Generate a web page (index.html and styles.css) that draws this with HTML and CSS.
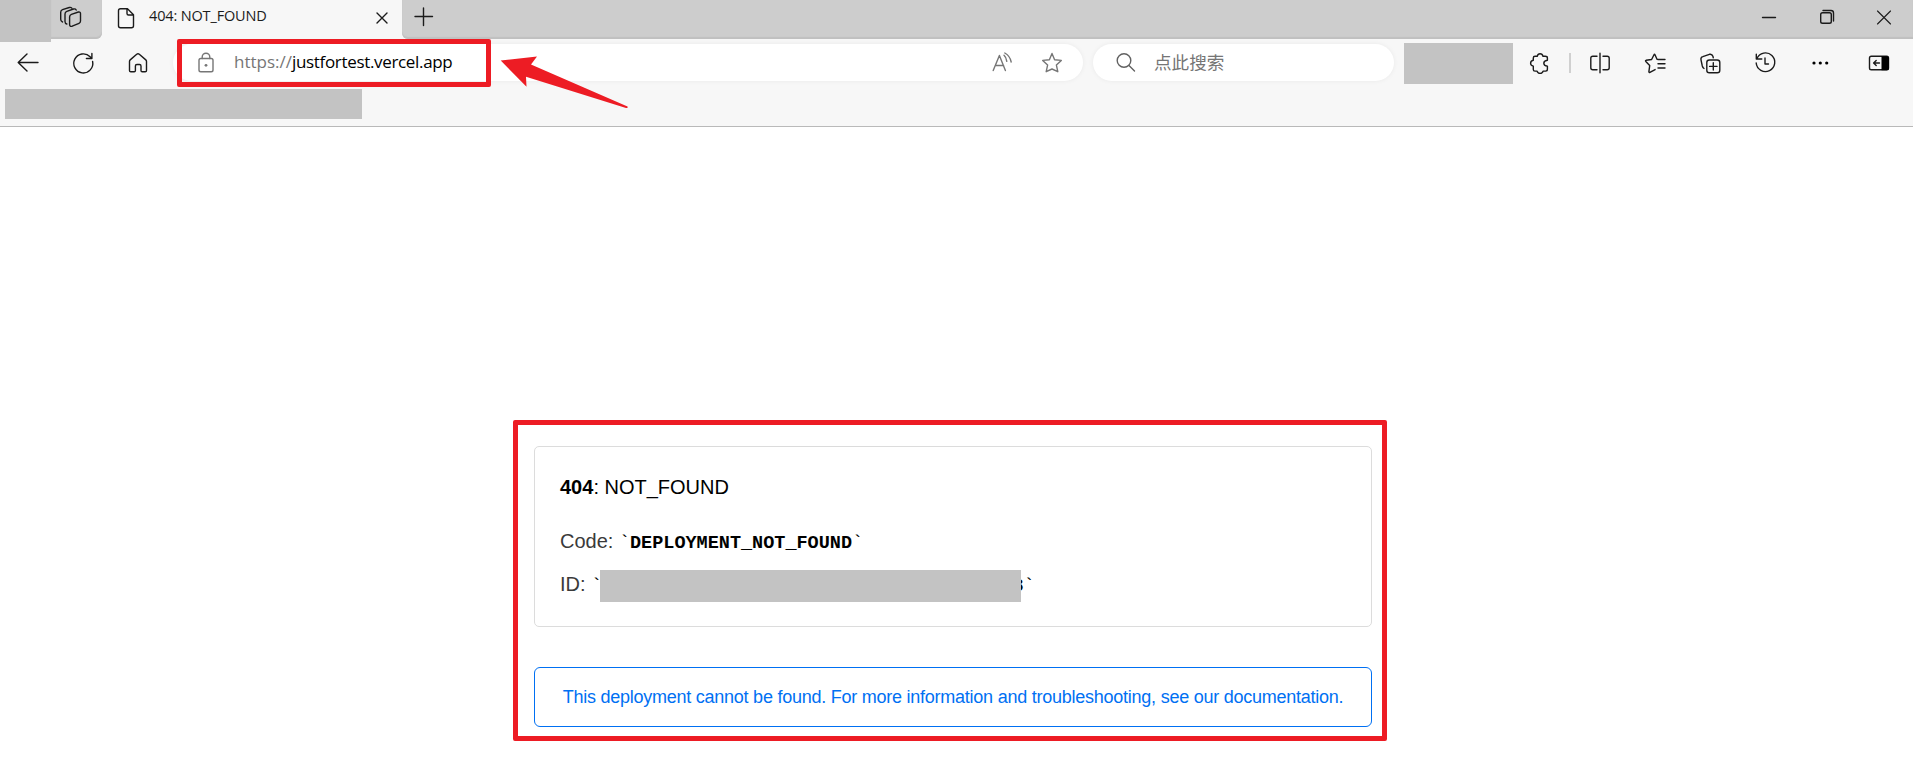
FILE: index.html
```html
<!DOCTYPE html>
<html lang="zh-CN">
<head>
<meta charset="utf-8">
<title>404: NOT_FOUND</title>
<link rel="stylesheet" href="styles.css">
</head>
<body>
<div class="tabstrip">
  <div class="mask mask-profile"></div>
  <div class="workspaces">
    <svg class="icon" viewBox="0 0 24 24"><path d="M12.400 9.300L19.400 7Q21.500 6.600 21.500 8.600V16Q21.500 17.700 20 18.300L13.200 21.200Q10.600 21.800 10.600 19.500V12Q10.600 10 12.400 9.300zM7.800 19Q6 18.500 6 16.500V9Q6 7 7.800 6.300L14.500 4Q16.500 3.600 17.200 5M3.500 17Q1.700 16.300 1.700 14.300V7.300Q1.700 5.300 3.500 4.700L10.300 2.500Q12 2.100 12.800 3.200"/></svg>
  </div>
  <div class="tab">
    <svg class="icon" viewBox="0 0 24 24"><path d="M6.500 2.700h7l6 6v11a2 2 0 0 1-2 2h-11a2 2 0 0 1-2-2v-15a2 2 0 0 1 2-2zM13 2.700v4.800a1.500 1.500 0 0 0 1.500 1.500h5"/></svg>
    <span class="tab-title">404: NOT_FOUND</span>
    <svg class="icon tab-close" viewBox="0 0 24 24"><path d="M7 7l10 10M17 7L7 17"/></svg>
  </div>
  <div class="strip-rest">
    <svg class="icon" viewBox="0 0 24 24"><path d="M3 11.500h17.500M11.500 3v17.500"/></svg>
    <div class="window-buttons">
      <svg class="icon" viewBox="0 0 24 24"><path d="M5.500 12.500h13"/></svg>
      <svg class="icon" viewBox="0 0 24 24"><rect x="5.700" y="7.700" width="10.600" height="10.600" rx="1.800"/><path d="M8 5.500h8a2.500 2.500 0 0 1 2.500 2.500v8"/></svg>
      <svg class="icon thin" viewBox="0 0 24 24"><path d="M5.500 6l13 13M18.500 6l-13 13"/></svg>
    </div>
  </div>
</div>

<div class="toolbar">
  <div class="cell"><svg class="icon" viewBox="0 0 24 24"><path d="M22 11.500H2.500M11 3L2.200 11.500l8.800 8.500"/></svg></div>
  <div class="cell"><svg class="icon" viewBox="0 0 24 24"><path d="M21.600 10.500a9.500 9.500 0 1 1-2.500-4.700l1.600 1.600M20.900 2.500v5h-5.500"/></svg></div>
  <div class="cell"><svg class="icon" viewBox="0 0 24 24"><path d="M3.500 10.500q0-1 .7-1.600l6.500-5.700q1.300-1 2.600 0l6.500 5.700q.7.600.7 1.600v9q0 1.300-1.300 1.300h-3q-1.200 0-1.200-1.300v-4.500q0-1.500-1.500-1.500h-2.600q-1.500 0-1.500 1.500v4.500q0 1.300-1.200 1.300H4.800q-1.300 0-1.300-1.300z"/></svg></div>
  <div class="address">
    <svg class="icon grey lock" viewBox="0 0 24 24"><rect x="5" y="7.500" width="14" height="13.200" rx="1.800"/><path d="M8.200 7.500V6a3.800 3.800 0 0 1 7.600 0v1.500"/><circle class="dot" cx="12" cy="14.300" r="1.400"/></svg>
    <span class="url"><span class="scheme">https://</span>justfortest.vercel.app</span>
    <svg class="icon grey aloud" viewBox="0 0 24 24"><path d="M3.200 19.500L9.400 4.500l6 15M5.400 14.500h8.200M14 4.300q2.300 2 2.800 6M14.800 2q5.300 3 6.400 9"/></svg>
    <svg class="icon grey" viewBox="0 0 24 24"><path d="M12 2.500l2.600 6.200 6.700.7-4.900 4.700 1.400 6.600L12 18l-5.800 2.700 1.400-6.600L2.700 9.400l6.700-.7z"/></svg>
  </div>
  <div class="search">
    <svg class="icon dim" viewBox="0 0 24 24"><circle cx="10" cy="9.500" r="6.800"/><path d="M15 14.500l5.500 5.500"/></svg>
    <span class="search-text">点此搜索</span>
  </div>
  <div class="mask mask-ext"></div>
  <div class="cell cell-ext"><svg class="icon" viewBox="0 0 24 24"><path d="M5.300 8V7q0-1.700 1.700-1.700h2.200q.6-2.600 2.900-2.600t2.900 2.600h2.200q2.200 0 2.200 1.700v2.300q-3.600.5-3.600 2.900t3.600 2.900v3.200q0 1.800-1.800 1.800h-2.500q-.6 2.300-3 2.300t-3-2.300H7q-1.700 0-1.700-1.700v-3.300q-2.700-.6-2.700-2.900t2.700-2.900z"/></svg></div>
  <div class="divider"></div>
  <div class="cell"><svg class="icon" viewBox="0 0 24 24"><path d="M9 5.200H4.800q-2 0-2 2v9.600q0 2 2 2H9M15 5.200h4.200q2 0 2 2v9.600q0 2-2 2H15M12 2.200v19.600"/></svg></div>
  <div class="cell"><svg class="icon" viewBox="0 0 24 24"><path d="M15.500 8.500l-1.500-.3L12 3.800q-.5-1-1 0L8.600 8.500l-5.500.8q-1 .3-.3 1.100l3.900 4.200-.8 6.100q.1 1.100 1 .6l5.200-2.700M15 8.500h7M15 12.800h7M15 17h7"/></svg></div>
  <div class="cell"><svg class="icon" viewBox="0 0 24 24"><rect x="8.800" y="9" width="13" height="12.800" rx="2.600"/><path d="M15.300 11.800v7.300M11.600 15.400h7.400M6 17.500q-1.200-.7-1.700-2.500L3 8.800q-.5-2.500 1.800-3.200l6.600-2.300q2.700-.6 3.500 2l.4 1.500"/></svg></div>
  <div class="cell"><svg class="icon" viewBox="0 0 24 24"><path d="M3.300 3.300v4.700h5.500M3.900 7.600A9.300 9.300 0 1 1 3.200 12M12 7v6h3.500"/></svg></div>
  <div class="cell"><svg class="icon" viewBox="0 0 24 24"><g class="dot"><circle cx="6" cy="12" r="1.600"/><circle cx="12.300" cy="12" r="1.600"/><circle cx="18.700" cy="12" r="1.600"/></g></svg></div>
  <div class="cell cell-side"><svg class="icon" viewBox="0 0 24 24"><rect x="2.500" y="5.300" width="19" height="13.500" rx="1.800"/><path class="solid" d="M14.500 5.300h5.500q2 0 2 1.500v10.500q0 2-2 2h-5.500z"/><path d="M12.500 12H7M9.200 9.400L6.600 12l2.600 2.600"/></svg></div>
  <div class="url-frame"></div>
  <svg class="arrow" viewBox="500 55 130 55"><path d="M500.700 60.500L537 56.500L531 64.500L627.500 106.500Q628.500 108.200 626 108L526 76.800L526.500 86.700Z"/></svg>
</div>
<div class="bookmarks"><div class="mask mask-bookmarks"></div></div>

<main class="page">
  <section class="frame">
    <div class="card">
      <h1 class="title"><strong>404</strong>: NOT_FOUND</h1>
      <p class="row">Code: <code class="code">`<b>DEPLOYMENT_NOT_FOUND</b>`</code></p>
      <p class="row">ID: <code class="code id-code">`<span class="mask mask-id"></span><b class="tail">8</b>`</code></p>
    </div>
    <a class="notice"><span>This deployment cannot be found. For more information and troubleshooting, see our documentation.</span></a>
  </section>
</main>
</body>
</html>
```
FILE: styles.css
```css
* { box-sizing: border-box; }

body {
  margin: 0;
  width: 1913px;
  height: 773px;
  overflow: hidden;
  background: #fff;
  font-family: "Liberation Sans", "Noto Sans CJK SC", sans-serif;
}

.icon {
  width: 24px;
  height: 24px;
  flex: none;
  fill: none;
  stroke: #1b1b1b;
  stroke-width: 1.4;
  stroke-linecap: round;
  stroke-linejoin: round;
}
.icon.grey { stroke: #767676; }
.icon.dim { stroke: #616161; }
.icon.thin { stroke-width: 1.1; }
.icon .dot, .icon .solid { fill: #000; stroke: none; }
.icon.grey .dot { fill: #767676; }

.mask { background: #c3c3c3; flex: none; }

/* Tab strip */
.tabstrip {
  display: flex;
  height: 39px;
  background: #f7f7f7;
}
.mask-profile { width: 51px; height: 42px; position: relative; z-index: 1; }
.workspaces, .strip-rest {
  background: #cdcdcd;
  box-shadow: inset 0 -2px 1px #c0c0c0;
  display: flex;
}
.workspaces {
  width: 51px;
  padding: 5px 0 0 8px;
  border-bottom-right-radius: 6px;
}
.tab {
  width: 300px;
  display: flex;
  padding: 6px 8px 0 12px;
}
.tab-title {
  font: 14.500px/22px "Open Sans", "Noto Sans", sans-serif;
  letter-spacing: -.15px;
  color: #1b1b1b;
  margin: -1px 0 0 11px;
  flex: 1;
  white-space: nowrap;
}
.strip-rest {
  flex: 1;
  padding: 5px 17px 0 10px;
  justify-content: space-between;
  border-bottom-left-radius: 6px;
}
.window-buttons { display: flex; gap: 33.500px; }

/* Toolbar */
.toolbar {
  display: flex;
  align-items: center;
  height: 47px;
  background: #f7f7f7;
  position: relative;
}
.cell {
  width: 55px;
  display: flex;
  justify-content: center;
  flex: none;
}
.cell-ext { width: 54px; }
.cell-side { width: 63px; }
.address, .search {
  height: 37px;
  border-radius: 19px;
  background: #fff;
  display: flex;
  align-items: center;
  box-shadow: 0 0 5px rgba(0, 0, 0, .06);
  flex: none;
}
.address {
  width: 910px;
  margin-left: 8px;
  padding: 0 19px 0 20.500px;
}
.url {
  font: 17px/24px "Open Sans", "Noto Sans", sans-serif;
  letter-spacing: -.33px;
  color: #000;
  margin: -1px 0 0 16.500px;
  flex: 1;
  white-space: nowrap;
}
.scheme { color: #767676; letter-spacing: 0; }
.aloud { margin-right: 26px; }
.search {
  width: 301px;
  margin-left: 10px;
  padding-left: 21px;
}
.search-text {
  font: 17.600px/24px "Noto Sans CJK SC", sans-serif;
  color: #757575;
  margin: -1px 0 0 16px;
}
.mask-ext { width: 109px; height: 41px; margin: 1px 0 0 10px; }
.divider { width: 2px; height: 20px; background: #d0d0d0; margin: 0 1.500px 0 2px; }
.url-frame {
  position: absolute;
  left: 177px;
  top: 0;
  width: 314px;
  height: 48px;
  border: 5px solid #ed1c24;
  border-radius: 2px;
}
.arrow {
  position: absolute;
  left: 500px;
  top: 16px;
  width: 130px;
  height: 55px;
  fill: #ed1c24;
}
.bookmarks {
  height: 41px;
  background: #f7f7f7;
  border-bottom: 1px solid #b9b9b9;
  padding: 3px 5px;
}
.mask-bookmarks { width: 357px; height: 30px; }

/* Page */
.page { padding: 293px 0 0 513px; }
.frame {
  width: 874px;
  height: 321px;
  border: 5px solid #ed1c24;
  border-radius: 2px;
  padding: 21px 10px 0 16px;
}
.card {
  height: 181px;
  border: 1px solid #dcdcdc;
  border-radius: 5px;
  padding: 24px 25px;
}
.title {
  margin: 0 0 22px;
  font-size: 20px;
  line-height: 32px;
  font-weight: 400;
  color: #000;
}
.row {
  display: flex;
  align-items: baseline;
  gap: 5.500px;
  margin: 0 0 11px;
  font-size: 20px;
  line-height: 32px;
  height: 32px;
  color: #3a3a3a;
}
.code {
  font: 18.500px/32px "Liberation Mono", monospace;
  color: #000;
}
.id-code { display: flex; align-items: flex-start; }
.mask-id { width: 421px; height: 32px; margin: -1px 0 0 -2.500px; z-index: 1; }
.tail { margin-left: -8.200px; }
.notice {
  display: flex;
  align-items: center;
  justify-content: center;
  margin-top: 40px;
  height: 60px;
  border: 1px solid #0070f3;
  border-radius: 6px;
  font-size: 18px;
  line-height: 24px;
  letter-spacing: -.245px;
  color: #0070f3;
  white-space: nowrap;
}
```
